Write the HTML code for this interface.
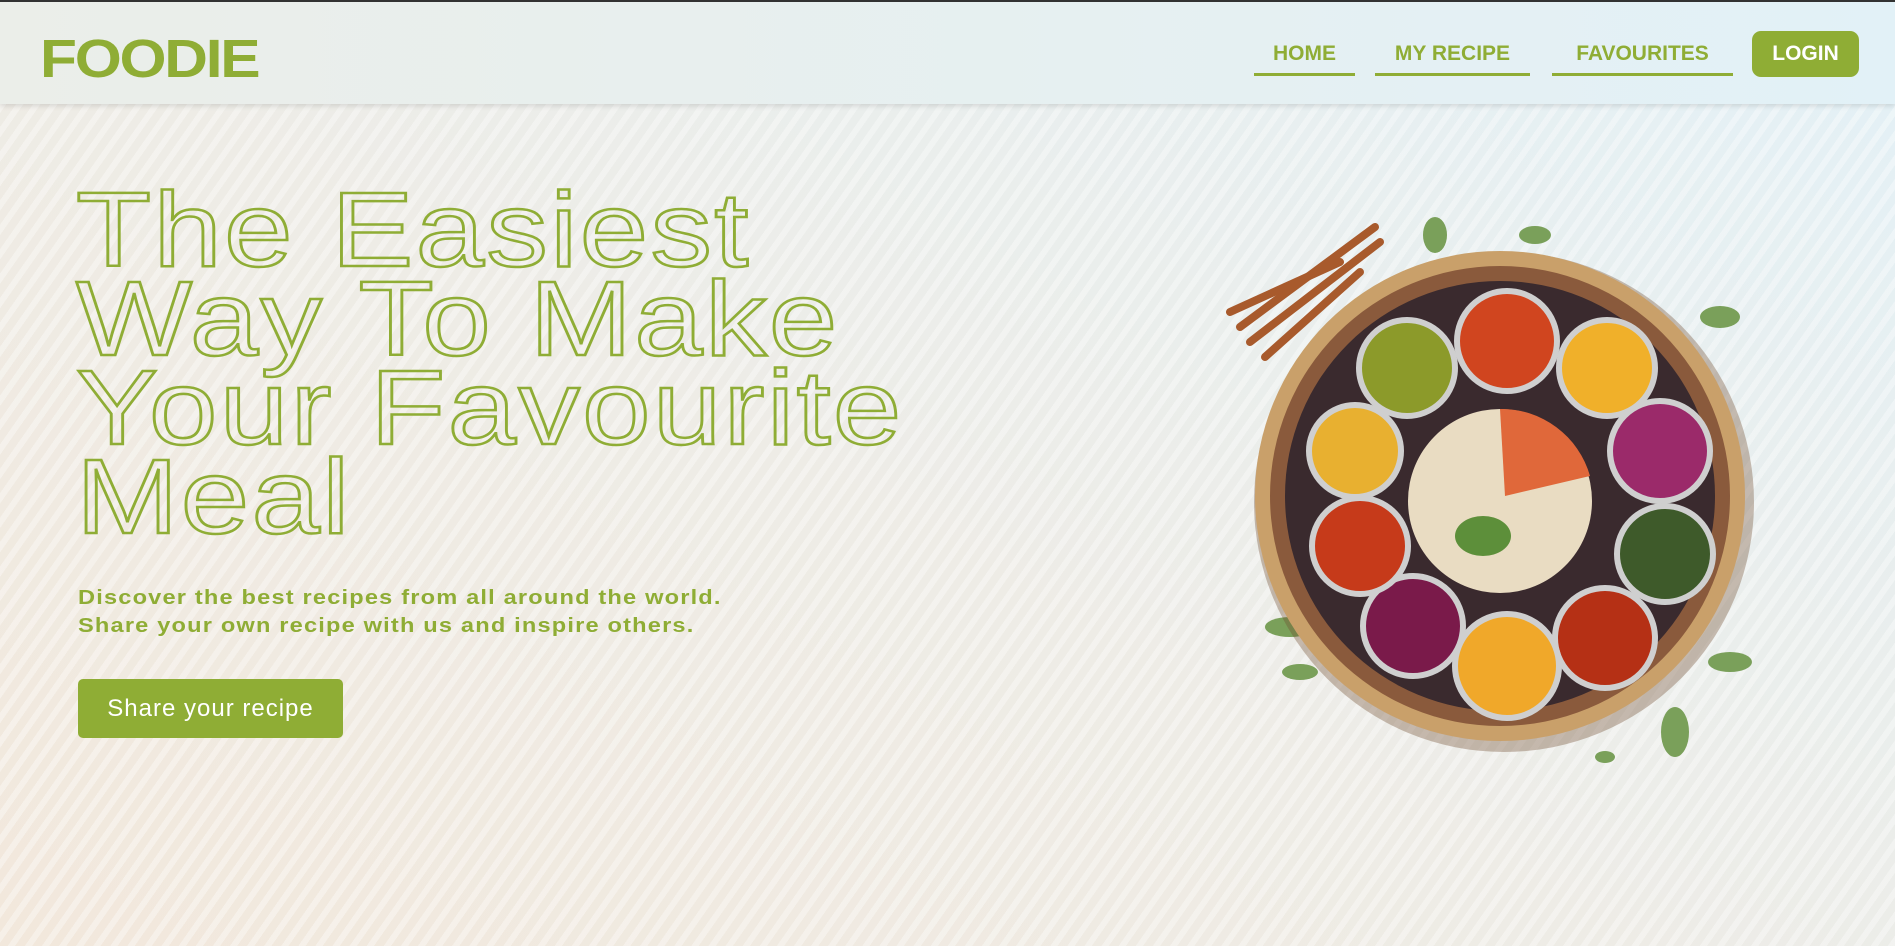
<!DOCTYPE html>
<html><head><meta charset="utf-8"><style>
*{margin:0;padding:0;box-sizing:border-box}
body{width:1895px;height:946px;overflow:hidden;font-family:"Liberation Sans",sans-serif;
background:linear-gradient(30deg,#f2e8dc 0%,#eeece6 45%,#e3f1f7 100%);position:relative;border-top:2px solid #333}
.stripes{position:absolute;inset:0;background:repeating-linear-gradient(-55deg,rgba(255,255,255,.35) 0 6px,rgba(255,255,255,0) 6px 14px)}
nav{position:absolute;top:0;left:0;width:1895px;height:102px;background:linear-gradient(90deg,#ebeee9,#e2f1f7);box-shadow:0 2px 5px rgba(0,0,0,.12)}
.logo{position:absolute;left:40px;top:26px;font-size:54px;font-weight:bold;color:#8fad35;letter-spacing:-2px;transform:scaleX(1.12);transform-origin:left;font-family:"Liberation Sans Narrow","Liberation Sans",sans-serif}
.nl{position:absolute;top:40px;font-size:21px;font-weight:bold;color:#8fad35;text-align:center;height:34px;border-bottom:3px solid #8fad35}
.login{position:absolute;left:1752px;top:29px;width:107px;height:46px;background:#8fad35;color:#fff;border-radius:9px;font-weight:bold;font-size:21px;text-align:center;line-height:46px}
h1{position:absolute;left:76px;top:184px;font-size:106px;line-height:89px;font-weight:normal;color:transparent;-webkit-text-stroke:2.5px #8fad35;letter-spacing:2px;white-space:nowrap;transform:scaleX(1.16);transform-origin:left}
p{position:absolute;left:78px;top:582px;font-size:20px;line-height:28px;font-weight:bold;color:#8fad35;letter-spacing:1px;white-space:nowrap;transform:scaleX(1.18);transform-origin:left}
.btn{position:absolute;left:78px;top:677px;width:265px;height:59px;background:#8fad35;border-radius:5px;color:#fff;font-size:24px;text-align:center;line-height:59px;letter-spacing:1px}
</style></head><body>
<div class="stripes"></div>
<nav>
<div class="logo">FOODIE</div>
<div class="nl" style="left:1254px;width:101px">HOME</div>
<div class="nl" style="left:1375px;width:155px">MY RECIPE</div>
<div class="nl" style="left:1552px;width:181px">FAVOURITES</div>
<div class="login">LOGIN</div>
</nav>
<h1>The Easiest<br>Way To Make<br>Your Favourite<br>Meal</h1>
<p>Discover the best recipes from all around the world.<br>Share your own recipe with us and inspire others.</p>
<div class="btn">Share your recipe</div>
<svg style="position:absolute;left:1200px;top:200px" width="620" height="580" viewBox="1200 200 620 580">
<g fill="#7aa05a">
<ellipse cx="1435" cy="233" rx="12" ry="18"/><ellipse cx="1535" cy="233" rx="16" ry="9"/>
<ellipse cx="1720" cy="315" rx="20" ry="11"/><ellipse cx="1290" cy="625" rx="25" ry="10"/>
<ellipse cx="1730" cy="660" rx="22" ry="10"/><ellipse cx="1675" cy="730" rx="14" ry="25"/>
<ellipse cx="1605" cy="755" rx="10" ry="6"/><ellipse cx="1300" cy="670" rx="18" ry="8"/>
</g>
<g stroke="#a85a2c" stroke-width="8" stroke-linecap="round">
<line x1="1240" y1="325" x2="1375" y2="225"/><line x1="1250" y1="340" x2="1380" y2="240"/>
<line x1="1265" y1="355" x2="1360" y2="270"/><line x1="1230" y1="310" x2="1340" y2="260"/>
</g>
<circle cx="1504" cy="500" r="250" fill="#6f4a2e" opacity=".35"/>
<circle cx="1500" cy="494" r="245" fill="#c9a06a"/>
<circle cx="1500" cy="494" r="230" fill="#8a5a3c"/>
<circle cx="1500" cy="494" r="215" fill="#3a2a2e"/>
<circle cx="1500" cy="499" r="92" fill="#e9dcc2"/>
<path d="M1500 407 A92 92 0 0 1 1590 474 L1505 494Z" fill="#e0683a"/>
<g stroke="#cfcfcf" stroke-width="6">
<circle cx="1407" cy="366" r="48" fill="#8c9a2a"/>
<circle cx="1507" cy="339" r="50" fill="#d0451f"/>
<circle cx="1607" cy="366" r="48" fill="#f0b02a"/>
<circle cx="1660" cy="449" r="50" fill="#9b2a6a"/>
<circle cx="1665" cy="552" r="48" fill="#3e5a2a"/>
<circle cx="1605" cy="636" r="50" fill="#b53015"/>
<circle cx="1507" cy="664" r="52" fill="#f0a82a"/>
<circle cx="1413" cy="624" r="50" fill="#7a1a4a"/>
<circle cx="1360" cy="544" r="48" fill="#c63a1a"/>
<circle cx="1355" cy="449" r="46" fill="#e8b030"/>
</g>
<ellipse cx="1483" cy="534" rx="28" ry="20" fill="#5d8f3a"/>
</svg>
</body></html>
